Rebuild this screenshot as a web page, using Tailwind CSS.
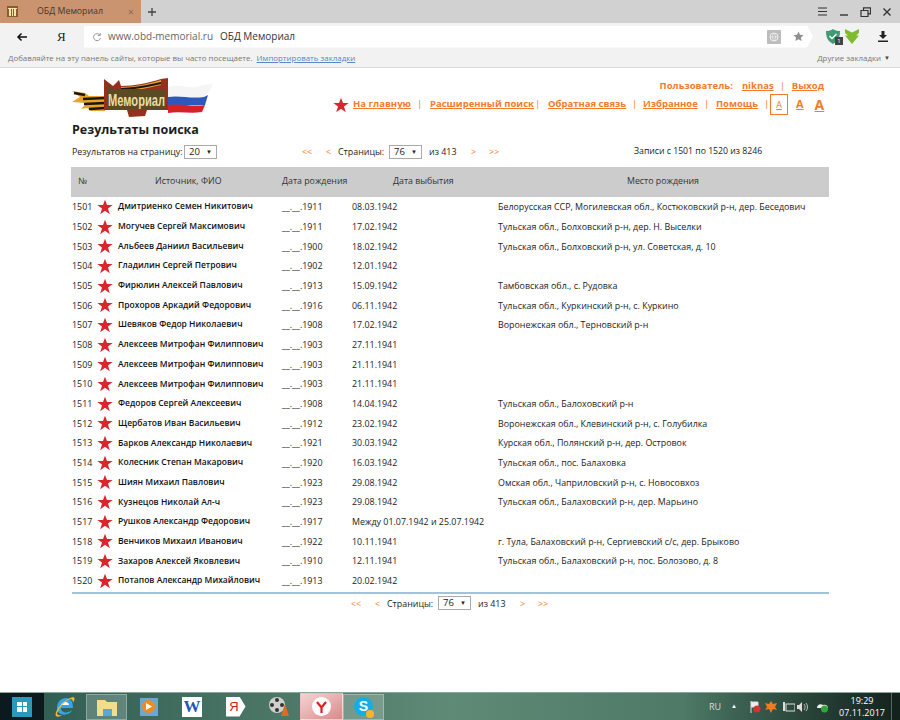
<!DOCTYPE html>
<html lang="ru">
<head>
<meta charset="utf-8">
<title>ОБД Мемориал</title>
<script src="https://cdn.jsdelivr.net/npm/@tailwindcss/browser@4"></script>
</head>
<body class="w-[900px] h-[720px] overflow-hidden bg-white font-['Open_Sans',sans-serif] text-[8.900px] text-[#222] flex flex-col">

<!-- browser tabs -->
<div class="h-[23px] shrink-0 bg-[#d1d1d1] flex items-center">
    <div class="w-[141px] h-[23px] bg-[#cb9470] flex items-center pl-[7px] pr-[7px]">
        <svg width="11" height="11" viewBox="0 0 11 11"><rect width="11" height="11" fill="#8a5b2c"/><path d="M1 2h9v1H9v7H7V3H6v7H5V3H4v7H2V3H1z" fill="#f3e3a6"/></svg>
        <span class="ml-[19px] text-[#4a3528] text-[8.800px] whitespace-nowrap">ОБД Мемориал</span>
        <span class="ml-auto text-[#8a6a55] text-[11px] leading-none">×</span>
    </div>
    <svg class="ml-[6px]" width="10" height="10" viewBox="0 0 10 10"><path d="M5 1v8M1 5h8" stroke="#444" stroke-width="1.3"/></svg>
    <div class="ml-auto flex items-center gap-[11px] pr-[8px]">
        <svg width="11" height="9" viewBox="0 0 11 9"><path d="M1 1h9M1 4.500h9M1 8h9" stroke="#333" stroke-width="1.2"/></svg>
        <svg width="10" height="9" viewBox="0 0 10 9"><path d="M1 8h8" stroke="#333" stroke-width="1.4"/></svg>
        <svg width="11" height="10" viewBox="0 0 11 10"><path d="M1 3.500h7v6H1zM3.500 3V.8h7v6H8.500" fill="none" stroke="#333" stroke-width="1.2"/></svg>
        <svg width="10" height="10" viewBox="0 0 10 10"><path d="M1.500 1.500l7 7M8.500 1.500l-7 7" stroke="#333" stroke-width="1.4"/></svg>
    </div>
</div>

<!-- address bar -->
<div class="h-[27px] shrink-0 bg-[#f2f2f2] flex items-center">
    <svg class="ml-[16px]" width="12" height="10" viewBox="0 0 12 10"><path d="M11 5H2M5.500 1.500L2 5l3.500 3.500" fill="none" stroke="#111" stroke-width="1.5"/></svg>
    <span class="ml-[29px] w-[27px] text-[13px] font-['Liberation_Serif',serif] text-[#222]">Я</span>
    <div class="flex-1 h-[22px] bg-white flex items-center pl-[8px] [clip-path:polygon(0_0,calc(100%-6px)_0,100%_50%,calc(100%-6px)_100%,0_100%)]">
        <svg width="10" height="10" viewBox="0 0 10 10"><path d="M8 3.200A3.500 3.500 0 1 0 8.500 6M8.300 1v2.500H5.800" fill="none" stroke="#999" stroke-width="1"/></svg>
        <span class="ml-[6px] text-[10px] text-[#666] whitespace-nowrap">www.obd-memorial.ru</span>
        <span class="ml-[7px] text-[10px] text-[#333] whitespace-nowrap">ОБД Мемориал</span>
        <div class="ml-auto w-[14px] h-[14px] bg-[#bdbdbd] rounded-[1px] flex items-center justify-center">
            <svg width="10" height="10" viewBox="0 0 10 10"><circle cx="5" cy="5" r="4" fill="none" stroke="#eee"/><path d="M1 5h8M5 1c-2 2.500-2 5.500 0 8M5 1c2 2.500 2 5.500 0 8" fill="none" stroke="#eee" stroke-width=".7"/></svg>
        </div>
        <svg class="ml-[12px] mr-[9px]" width="11" height="11" viewBox="0 0 24 24"><path d="M12 1l3.300 7.300 7.700.8-5.800 5.200 1.700 7.700L12 18l-6.900 4 1.700-7.700L1 9.100l7.700-.8z" fill="#8f8f8f"/></svg>
    </div>
    <div class="w-[87px] shrink-0 flex items-center pl-[13px]">
        <div class="relative w-[18px] h-[16px]">
            <svg width="14" height="15" viewBox="0 0 14 15"><path d="M7 0c2 1.500 4 2 7 2 0 6-1.500 10-7 13C1.500 12 0 8 0 2c3 0 5-.5 7-2z" fill="#3e9b74"/><path d="M3.500 7l2.500 2.500 4.500-4.500" fill="none" stroke="#fff" stroke-width="1.300"/></svg>
            <span class="absolute right-[1px] bottom-0 w-[8px] h-[8px] bg-[#444] text-white text-[6px] leading-[8px] text-center">1</span>
        </div>
        <svg class="ml-[1px]" width="14" height="15" viewBox="0 0 14 15"><path d="M0 0l7 3.500L14 0v4l-3 2.500h3L7 15 0 6.500h3L0 4z" fill="#7fbb2e"/></svg>
        <svg class="ml-[19px]" width="10" height="11" viewBox="0 0 10 11"><path d="M3.500 0h3v4H9L5 8 1 4h2.500zM0 9.500h10V11H0z" fill="#222"/></svg>
    </div>
</div>

<!-- bookmarks bar -->
<div class="h-[18px] shrink-0 bg-[#f2f2f2] border-b border-[#dcdcdc] flex items-center pl-[8px] pr-[10px] text-[7.900px] text-[#777] whitespace-nowrap">
    <span>Добавляйте на эту панель сайты, которые вы часто посещаете.</span>
    <a class="ml-[4px] text-[#5b86c4] underline" href="#">Импортировать закладки</a>
    <span class="ml-auto">Другие закладки</span>
    <span class="ml-[3px] text-[6px] text-[#444]">▼</span>
</div>

<!-- page -->
<main class="flex-1 min-h-0 pl-[71px] pr-[71px]">
    <header class="h-[62px] flex justify-between">
        <svg class="mt-[10px] shrink-0" width="146" height="42" viewBox="0 0 146 42">
            <path d="M1 13l13 2 4 3h16v15H20l-4-3-6 1 6-6-15-1 8-5z" fill="#e9a32b"/>
            <path d="M3 15l11 2M12 21l22-1M13 26l21-1M18 31l16-1" stroke="#1c170f" stroke-width="2.500" fill="none"/>
            <path d="M97 9c12-4 20 3 31-1 5-1 10-2 14-2l-5 9-4 4-36 1z" fill="#f5f5f5"/>
            <path d="M97 19c12-2 22 2 36 0l4-2-3 10H97z" fill="#2f58bd"/>
            <path d="M97 27c12-2 24 2 37 0l-3 7c-11 2-22-1-34 1z" fill="#d8202a"/>
            <path d="M33 1l9 7 6-6 2 6c14 0 27-3 40-7l7-1v32H76l-2 6-16 1-2-7H33z" fill="#96301e"/>
            <path d="M50 9c14 0 27-3 40-7v5c-14 3-26 6-40 6z" fill="#e9a32b"/>
            <path d="M50 11c14 0 27-3 40-6" stroke="#1c170f" stroke-width="1.800" fill="none"/>
            <path d="M36 7l6 4h53v20H36z" fill="#5b4a22"/>
            <text x="37" y="28" font-family="Liberation Sans" font-weight="700" font-size="17" textLength="57" lengthAdjust="spacingAndGlyphs" fill="#e9dca6">Мемориал</text>
        </svg>
        <div class="flex flex-col items-end text-[#f47b2a] font-bold text-[9.500px] w-[520px] pr-[4px]">
            <div class="mt-[12px] flex items-center h-[12px] pr-[1px]">
                <span>Пользователь:</span>
                <a class="underline ml-[9px]" href="#">niknas</a>
                <span class="ml-[6px] font-normal">|</span>
                <a class="ml-[7px] underline" href="#">Выход</a>
            </div>
            <nav class="mt-[2px] flex items-center h-[21px] w-[492px] whitespace-nowrap">
                <svg class="shrink-0" width="16" height="16" viewBox="0 0 24 24"><path d="M12 1l3 8h8.500l-7 5.200 2.700 8.600L12 17.500l-7.200 5.300 2.700-8.600-7-5.200H9z" fill="#d9262c"/></svg>
                <a class="ml-[4px] w-[55px] shrink-0 underline" href="#">На главную</a>
                <span class="ml-[9px] w-[1px] shrink-0 font-normal">|</span>
                <a class="ml-[12px] w-[96px] shrink-0 underline" href="#">Расширенный поиск</a>
                <span class="ml-[9px] w-[1px] shrink-0 font-normal">|</span>
                <a class="ml-[12px] w-[73px] shrink-0 underline" href="#">Обратная связь</a>
                <span class="ml-[11px] w-[1px] shrink-0 font-normal">|</span>
                <a class="ml-[10px] w-[52px] shrink-0 underline" href="#">Избранное</a>
                <span class="ml-[9px] w-[1px] shrink-0 font-normal">|</span>
                <a class="ml-[11px] w-[39px] shrink-0 underline" href="#">Помощь</a>
                <span class="ml-[9px] w-[1px] shrink-0 font-normal">|</span>
                <span class="ml-[5px] w-[18px] h-[21px] shrink-0 border border-[#f47b2a] flex items-center justify-center underline text-[9px] font-normal">A</span>
                <span class="ml-[8px] underline text-[11px]">A</span>
                <span class="ml-[11px] underline text-[14px]">A</span>
            </nav>
        </div>
    </header>

    <h1 class="mt-[-8px] ml-[1px] text-[12.500px] leading-[16px] font-bold text-[#1c1c1c]">Результаты поиска</h1>

    <div class="mt-[6px] h-[16px] ml-[1px] flex items-center whitespace-nowrap">
        <div class="w-[230px] flex items-center">
            <span class="w-[108px]">Результатов на страницу:</span>
            <span class="ml-[4px] w-[33px] h-[14px] border border-[#aaa] flex items-center justify-between px-[4px] text-[9.500px]">20<i class="not-italic text-[6px]">▼</i></span>
        </div>
        <div class="w-[332px] flex items-center text-[#f47b2a]">
            <span class="w-[11px]">&lt;&lt;</span>
            <span class="ml-[13px] w-[5px]">&lt;</span>
            <span class="ml-[7px] w-[47px] text-[#222]">Страницы:</span>
            <span class="ml-[4px] w-[33px] h-[14px] border border-[#aaa] flex items-center justify-between px-[4px] text-[9.500px] text-[#222]">76<i class="not-italic text-[6px]">▼</i></span>
            <span class="ml-[7px] w-[29px] text-[#222]">из 413</span>
            <span class="ml-[13px] w-[5px]">&gt;</span>
            <span class="ml-[13px]">&gt;&gt;</span>
        </div>
        <span class="text-[8.700px]">Записи с 1501 по 1520 из 8246</span>
    </div>

    <div class="mt-[7px] w-[758px] h-[30px] bg-[#cccccc] grid grid-cols-[84px_127px_111px_234px_1fr] items-center text-[8.800px] text-[#333]">
        <span class="pl-[7px]">№</span>
        <span>Источник, ФИО</span>
        <span>Дата рождения</span>
        <span>Дата выбытия</span>
        <span>Место рождения</span>
    </div>

    <div id="rows" class="ml-[1px] w-[757px] pb-[2px] border-b-2 border-[#a3c4d8]"></div>

    <div class="mt-[1px] ml-[280px] flex items-center h-[16px] whitespace-nowrap text-[#f47b2a]">
        <span class="w-[11px]">&lt;&lt;</span>
        <span class="ml-[13px] w-[5px]">&lt;</span>
        <span class="ml-[7px] w-[47px] text-[#222]">Страницы:</span>
        <span class="ml-[4px] w-[33px] h-[14px] border border-[#aaa] flex items-center justify-between px-[4px] text-[9.500px] text-[#222]">76<i class="not-italic text-[6px]">▼</i></span>
        <span class="ml-[7px] w-[29px] text-[#222]">из 413</span>
        <span class="ml-[13px] w-[5px]">&gt;</span>
        <span class="ml-[13px]">&gt;&gt;</span>
    </div>
</main>

<!-- windows taskbar -->
<footer class="h-[28px] shrink-0 flex items-center bg-gradient-to-r from-[#2d5a50] via-[#5f8a76] to-[#3d6a58] border-t border-[#8aa79a] relative">
    <div class="w-[44px] h-[27px] bg-[#0c1a20] flex items-center justify-center">
        <div class="w-[20px] h-[20px] bg-[#2b9ab8] grid grid-cols-2 gap-[1px] p-[5px]">
            <i class="bg-white"></i><i class="bg-white"></i><i class="bg-white"></i><i class="bg-white"></i>
        </div>
    </div>
    <div class="w-[42px] flex justify-center">
        <svg width="22" height="22" viewBox="0 0 22 22"><path d="M3 12c0-6 4-10 9-10s7 4 7 10H7c0 5 7 6 11 2-2 6-15 7-15-2z" fill="#33a5e8"/><path d="M7 9h8c0-4-7-4-8 0z" fill="#fff"/><path d="M2 20C0 16 8 4 19 1c3 1 1 4 0 6 0-3-1-4-3-4C9 6 4 14 3 18c2 2 4 1 5 1-2 2-5 2-6 1z" fill="#f2b632"/></svg>
    </div>
    <div class="w-[41px] h-[26px] bg-white/20 border border-white/30 flex justify-center items-center">
        <svg width="22" height="20" viewBox="0 0 22 20"><path d="M1 3h8l2 2h10v14H1z" fill="#f3dc8c"/><rect x="7" y="12" width="9" height="7" fill="#5aa6d8"/></svg>
    </div>
    <div class="w-[43px] flex justify-center">
        <div class="w-[18px] h-[18px] bg-[#6aa8cf] flex items-center justify-center"><div class="w-[13px] h-[13px] rounded-full bg-[#f28a1e] flex items-center justify-center"><svg width="7" height="7" viewBox="0 0 7 7"><path d="M1 0l6 3.500L1 7z" fill="#fff"/></svg></div></div>
    </div>
    <div class="w-[44px] flex justify-center">
        <div class="w-[20px] h-[20px] bg-white flex items-center justify-center text-[#1f56b8] font-['Liberation_Serif',serif] font-bold text-[17px] leading-none">W</div>
    </div>
    <div class="w-[43px] flex justify-center">
        <div class="w-[20px] h-[20px] bg-white [clip-path:polygon(0_0,70%_0,100%_50%,70%_100%,0_100%)] flex items-center justify-center pr-[3px] text-[#d92020] text-[13px] leading-none font-['Liberation_Sans',sans-serif]">Я</div>
    </div>
    <div class="w-[43px] flex justify-center">
        <svg width="22" height="22" viewBox="0 0 22 22"><circle cx="9" cy="9" r="8" fill="#cfcfcf"/><circle cx="9" cy="4" r="2" fill="#333"/><circle cx="4" cy="9" r="2" fill="#333"/><circle cx="14" cy="9" r="2" fill="#333"/><circle cx="9" cy="14" r="2" fill="#333"/><path d="M13 20l4-12 4 12z" fill="#e06a20"/></svg>
    </div>
    <div class="w-[43px] h-[27px] bg-gradient-to-br from-[#f4d4d4] to-[#d88a8a] border border-white/30 flex justify-center items-center">
        <div class="w-[19px] h-[19px] rounded-full bg-white flex items-center justify-center"><svg width="11" height="12" viewBox="0 0 11 12"><path d="M1 1l4.500 5.500L10 1M5.500 6.500V12" fill="none" stroke="#e02020" stroke-width="2.200"/></svg></div>
    </div>
    <div class="w-[41px] h-[26px] bg-white/20 border border-white/30 flex justify-center items-center relative">
        <div class="w-[19px] h-[19px] rounded-full bg-[#12aeea] text-white font-bold text-[14px] leading-[19px] text-center font-['Liberation_Sans',sans-serif]">S</div>
        <span class="absolute right-[9px] bottom-[1px] w-[8px] h-[8px] rounded-full bg-[#f2b632]"></span>
    </div>
    <div class="ml-auto flex items-center h-[27px] text-white whitespace-nowrap bg-gradient-to-r from-transparent to-[#14221e] pl-[24px]">
        <span class="text-[9px] text-[#d6dfda]">RU</span>
        <span class="ml-[10px] text-[6px]">▲</span>
        <svg class="ml-[12px]" width="12" height="12" viewBox="0 0 12 12"><path d="M2 0v12M2 1h7v5H2" fill="#eee" stroke="#ddd"/><circle cx="8" cy="8" r="3.500" fill="#d93030"/></svg>
        <svg class="ml-[4px]" width="12" height="12" viewBox="0 0 12 12"><path d="M6 0l2 3 4-1-2 4 2 3-4-1-2 4-2-4-4 1 2-3-2-4 4 1z" fill="#f07a1e"/></svg>
        <svg class="ml-[6px]" width="12" height="12" viewBox="0 0 12 12"><rect x="3" y="3" width="9" height="7" fill="none" stroke="#ddd"/><rect x="0" y="1" width="2" height="9" fill="#ddd"/></svg>
        <svg class="ml-[2px]" width="11" height="10" viewBox="0 0 11 10"><path d="M0 3h2l3-3v10L2 7H0z" fill="#ddd"/><path d="M7 2c1.500 2 1.500 4 0 6M9 1c2 2.500 2 5.500 0 8" fill="none" stroke="#bbb"/></svg>
        <svg class="ml-[8px]" width="13" height="12" viewBox="0 0 13 12"><path d="M1 7c0-3 3-5 6-3 3-1 5 1 5 3z" fill="#eee"/><circle cx="8.500" cy="8" r="3.500" fill="#2fa838"/></svg>
        <div class="ml-[4px] w-[58px] h-[27px] flex flex-col items-center justify-center text-[9px] leading-[12px]">
            <span>19:29</span>
            <span>07.11.2017</span>
        </div>
        <div class="w-[9px] h-[27px] border-l border-white/30 bg-[#14221e]"></div>
    </div>
</footer>

<script>
    const people = [
        ['1501', 'Дмитриенко Семен Никитович', '__.__.1911', '08.03.1942', 'Белорусская ССР, Могилевская обл., Костюковский р-н, дер. Беседович'],
        ['1502', 'Могучев Сергей Максимович', '__.__.1911', '17.02.1942', 'Тульская обл., Болховский р-н, дер. Н. Выселки'],
        ['1503', 'Альбеев Даниил Васильевич', '__.__.1900', '18.02.1942', 'Тульская обл., Болховский р-н, ул. Советская, д. 10'],
        ['1504', 'Гладилин Сергей Петрович', '__.__.1902', '12.01.1942', ''],
        ['1505', 'Фирюлин Алексей Павлович', '__.__.1913', '15.09.1942', 'Тамбовская обл., с. Рудовка'],
        ['1506', 'Прохоров Аркадий Федорович', '__.__.1916', '06.11.1942', 'Тульская обл., Куркинский р-н, с. Куркино'],
        ['1507', 'Шевяков Федор Николаевич', '__.__.1908', '17.02.1942', 'Воронежская обл., Терновский р-н'],
        ['1508', 'Алексеев Митрофан Филиппович', '__.__.1903', '27.11.1941', ''],
        ['1509', 'Алексеев Митрофан Филиппович', '__.__.1903', '21.11.1941', ''],
        ['1510', 'Алексеев Митрофан Филиппович', '__.__.1903', '21.11.1941', ''],
        ['1511', 'Федоров Сергей Алексеевич', '__.__.1908', '14.04.1942', 'Тульская обл., Балоховский р-н'],
        ['1512', 'Щербатов Иван Васильевич', '__.__.1912', '23.02.1942', 'Воронежская обл., Клевинский р-н, с. Голубилка'],
        ['1513', 'Барков Александр Николаевич', '__.__.1921', '30.03.1942', 'Курская обл., Полянский р-н, дер. Островок'],
        ['1514', 'Колесник Степан Макарович', '__.__.1920', '16.03.1942', 'Тульская обл., пос. Балаховка'],
        ['1515', 'Шиян Михаил Павлович', '__.__.1923', '29.08.1942', 'Омская обл., Чаприловский р-н, с. Новосовхоз'],
        ['1516', 'Кузнецов Николай Ал-ч', '__.__.1923', '29.08.1942', 'Тульская обл., Балаховский р-н, дер. Марьино'],
        ['1517', 'Рушков Александр Федорович', '__.__.1917', 'Между 01.07.1942 и 25.07.1942', ''],
        ['1518', 'Венчиков Михаил Иванович', '__.__.1922', '10.11.1941', 'г. Тула, Балаховский р-н, Сергиевский с/с, дер. Брыково'],
        ['1519', 'Захаров Алексей Яковлевич', '__.__.1910', '12.11.1941', 'Тульская обл., Балаховский р-н, пос. Болозово, д. 8'],
        ['1520', 'Потапов Александр Михайлович', '__.__.1913', '20.02.1942', ''],
    ];
    document.getElementById('rows').innerHTML = people.map(p => `
        <div class="h-[19.680px] grid grid-cols-[25px_21px_164px_70px_146px_1fr] items-center whitespace-nowrap">
            <span>${p[0]}</span>
            <svg width="16" height="16" viewBox="0 0 24 24"><path d="M12 1l3 8h8.500l-7 5.200 2.700 8.600L12 17.500l-7.200 5.300 2.700-8.600-7-5.200H9z" fill="#d9262c"/></svg>
            <span class="font-semibold text-[8.500px] text-[#111]">${p[1]}</span>
            <span>${p[2]}</span>
            <span>${p[3]}</span>
            <span>${p[4]}</span>
        </div>`).join('');
</script>
</body>
</html>
